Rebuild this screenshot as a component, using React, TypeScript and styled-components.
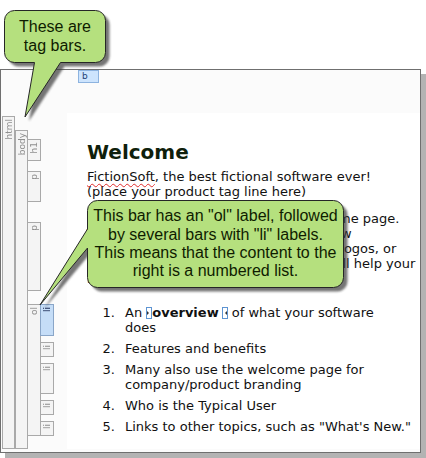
import React from "react";
import styled, { createGlobalStyle } from "styled-components";

const Global = createGlobalStyle`
  html, body { margin: 0; padding: 0; background: #ffffff; }
  body { width: 426px; height: 458px; overflow: hidden; }
`;

const Stage = styled.div`
  position: relative;
  width: 426px;
  height: 458px;
  padding-top: 69px;
  box-sizing: border-box;
  font-family: "DejaVu Sans", Verdana, sans-serif;
`;

const Frame = styled.div`
  width: 421px;
  height: 384px;
  box-sizing: border-box;
  border: 1px solid #6f6f6f;
  box-shadow: 5px 5px 0 #b3b3b3;
  display: flex;
  background: #fbfbfb;
`;

const Sidebar = styled.div`
  width: 66px;
  flex: none;
  box-sizing: border-box;
  padding: 46px 0 3px 1px;
  display: flex;
`;

const Level = styled.div<{ $mt?: number; $h?: number; $grow?: boolean }>`
  display: flex;
  align-items: stretch;
  margin-top: ${(p) => p.$mt ?? 0}px;
  ${(p) => (p.$h ? `height: ${p.$h}px; flex: none;` : "")}
  ${(p) => (p.$grow ? "flex: 1;" : "")}
`;

const Children = styled.div<{ $overlap?: boolean }>`
  display: flex;
  flex-direction: column;
  margin-left: ${(p) => (p.$overlap ? -1 : 0)}px;
`;

const BarBox = styled.div<{ $w: number; $mt: number; $h?: number; $sel?: boolean }>`
  width: ${(p) => p.$w}px;
  flex: none;
  ${(p) => (p.$h ? `height: ${p.$h}px;` : "")}
  margin-top: ${(p) => p.$mt}px;
  box-sizing: border-box;
  border: 1px solid ${(p) => (p.$sel ? "#8aa6c8" : "#a9a9a9")};
  background: ${(p) => (p.$sel ? "#c5ddf7" : "#f4f4f4")};
  display: flex;
  justify-content: center;
  align-items: flex-start;
  padding-top: 2px;
`;

const BarLabel = styled.span<{ $sel?: boolean }>`
  writing-mode: vertical-rl;
  transform: rotate(180deg);
  font-family: "DejaVu Sans", Tahoma, sans-serif;
  font-size: 9px;
  line-height: 10px;
  color: ${(p) => (p.$sel ? "#1b2b55" : "#8f8f8f")};
`;

function Bar(props: { label: string; w?: number; mt?: number; h?: number; sel?: boolean }) {
  return (
    <BarBox $w={props.w ?? 14} $mt={props.mt ?? 0} $h={props.h} $sel={props.sel}>
      <BarLabel $sel={props.sel}>{props.label}</BarLabel>
    </BarBox>
  );
}

const Main = styled.div`
  flex: 1;
  display: flex;
  flex-direction: column;
  min-width: 0;
`;

const TopStrip = styled.div`
  height: 43px;
  flex: none;
  padding-left: 11px;
  display: flex;
  align-items: flex-start;
`;

const InlineTag = styled.div`
  width: 21px;
  height: 13px;
  box-sizing: border-box;
  border: 1px solid #8db3df;
  background: #cde4fd;
  font-family: "DejaVu Sans", Tahoma, sans-serif;
  font-size: 9px;
  line-height: 11px;
  color: #1f3f78;
  padding-left: 3px;
`;

const Content = styled.div`
  flex: 1;
  background: #ffffff;
  padding: 27px 0 0 20px;
  margin-bottom: 3px;
  color: #111111;
  overflow: hidden;
`;

const Title = styled.h1`
  margin: 0;
  font-family: "DejaVu Sans", Verdana, sans-serif;
  font-weight: bold;
  font-size: 20px;
  line-height: 24px;
  color: #0f1f0c;
`;

const Para = styled.p<{ $mt: number }>`
  margin: ${(p) => p.$mt}px 0 0;
  font-size: 13px;
  line-height: 15px;
  white-space: nowrap;
`;

const Misspelled = styled.span`
  text-decoration: underline wavy #e02b2b;
  text-decoration-thickness: 1px;
  text-underline-offset: 2px;
`;

const List = styled.ol`
  list-style: none;
  margin: 19px 0 0;
  padding: 0;
  display: flex;
  flex-direction: column;
  gap: 6px;
`;

const Item = styled.li`
  display: grid;
  grid-template-columns: 28px 1fr;
  column-gap: 10px;
  font-size: 13px;
  line-height: 15px;
  white-space: nowrap;
`;

const Num = styled.span`
  text-align: right;
`;

const Marker = styled.span<{ $close?: boolean }>`
  display: inline-block;
  position: relative;
  width: 6px;
  height: 12px;
  box-sizing: border-box;
  border: 1px solid #5d94d2;
  vertical-align: -2px;
  margin-left: ${(p) => (p.$close ? 3 : 0)}px;
  &::after {
    content: "";
    position: absolute;
    top: 3px;
    ${(p) => (p.$close ? "right: 0;" : "left: 0;")}
    width: 0;
    height: 0;
    border-top: 2px solid transparent;
    border-bottom: 2px solid transparent;
    ${(p) => (p.$close ? "border-right: 2px solid #333;" : "border-left: 2px solid #333;")}
  }
`;

const CalloutWrap = styled.div<{ $l: number; $t: number; $w: number; $h: number }>`
  position: absolute;
  left: ${(p) => p.$l}px;
  top: ${(p) => p.$t}px;
  width: ${(p) => p.$w}px;
  height: ${(p) => p.$h}px;
  pointer-events: none;
  svg { position: absolute; left: 0; top: 0; overflow: visible; }
`;

const CalloutText = styled.div<{ $l: number; $t: number; $w: number; $h: number }>`
  position: absolute;
  left: ${(p) => p.$l}px;
  top: ${(p) => p.$t}px;
  width: ${(p) => p.$w}px;
  height: ${(p) => p.$h}px;
  display: flex;
  align-items: center;
  justify-content: center;
  text-align: center;
  font-family: "Liberation Sans", Arial, sans-serif;
  font-size: 16px;
  line-height: 18.3px;
  color: #0f1c00;
  white-space: nowrap;
`;

function Callout(props: {
  box: [number, number, number, number];
  text: [number, number, number, number];
  d: string;
  id: string;
  children: React.ReactNode;
}) {
  const [l, t, w, h] = props.box;
  const [tx, ty, tw, th] = props.text;
  return (
    <CalloutWrap $l={l} $t={t} $w={w} $h={h}>
      <svg width={w} height={h} viewBox={`${l} ${t} ${w} ${h}`}>
        <defs>
          <filter id={props.id} x="-10%" y="-10%" width="120%" height="120%">
            <feGaussianBlur stdDeviation="0.8" />
          </filter>
        </defs>
        <path d={props.d} transform="translate(4 4)" fill="#3a3a3a" opacity="0.7" filter={`url(#${props.id})`} />
        <path d={props.d} fill="#b5e07e" stroke="#262626" strokeWidth="1" strokeLinejoin="round" />
      </svg>
      <CalloutText $l={tx - l} $t={ty - t} $w={tw} $h={th}>
        {props.children}
      </CalloutText>
    </CalloutWrap>
  );
}

const path1 =
  "M14.5 10.5 H95.5 A10 10 0 0 1 105.5 20.5 V52.5 A10 10 0 0 1 95.5 62.5 H60.5 L25 117 L34.5 62.5 H14.5 A10 10 0 0 1 4.5 52.5 V20.5 A10 10 0 0 1 14.5 10.5 Z";
const path2 =
  "M97.5 200.5 H333.5 A10 10 0 0 1 343.5 210.5 V277.5 A10 10 0 0 1 333.5 287.5 H97.5 A10 10 0 0 1 87.5 277.5 V248 L40 305 L87.5 229 V210.5 A10 10 0 0 1 97.5 200.5 Z";

export default function App() {
  return (
    <>
      <Global />
      <Stage>
        <Frame>
          <Sidebar>
            <Level $grow>
              <Bar label="html" w={13} />
              <Children>
                <Level $grow $mt={14}>
                  <Bar label="body" w={13} />
                  <Children $overlap>
                    <Bar label="h1" mt={9} h={22} />
                    <Bar label="p" mt={10} h={31} />
                    <Bar label="p" mt={20} h={69} />
                    <Level $mt={13} $h={132}>
                      <Bar label="ol" />
                      <Children $overlap>
                        <Bar label="li" h={32} sel />
                        <Bar label="li" mt={6} h={15} />
                        <Bar label="li" mt={6} h={31} />
                        <Bar label="li" mt={6} h={15} />
                        <Bar label="li" mt={6} h={15} />
                      </Children>
                    </Level>
                  </Children>
                </Level>
              </Children>
            </Level>
          </Sidebar>
          <Main>
            <TopStrip>
              <InlineTag>b</InlineTag>
            </TopStrip>
            <Content>
              <Title>Welcome</Title>
              <Para $mt={5}>
                <Misspelled>FictionSoft</Misspelled>, the best fictional software ever!
                <br />
                (place your product tag line here)
              </Para>
              <Para $mt={12}>
                Introducing your product on this welcome page.
                <br />
                Tell users what they can expect and how
                <br />
                Some authors like to add screenshots, logos, or
                <br />
                other images and anything else that will help your
                <br />
                buyers get started.
              </Para>
              <List>
                <Item>
                  <Num>1.</Num>
                  <span>
                    An <Marker />
                    <b>overview</b>
                    <Marker $close /> of what your software
                    <br />
                    does
                  </span>
                </Item>
                <Item>
                  <Num>2.</Num>
                  <span>Features and benefits</span>
                </Item>
                <Item>
                  <Num>3.</Num>
                  <span>
                    Many also use the welcome page for
                    <br />
                    company/product branding
                  </span>
                </Item>
                <Item>
                  <Num>4.</Num>
                  <span>Who is the Typical User</span>
                </Item>
                <Item>
                  <Num>5.</Num>
                  <span>Links to other topics, such as "What's New."</span>
                </Item>
              </List>
            </Content>
          </Main>
        </Frame>
        <Callout id="sh1" box={[0, 6, 116, 118]} text={[4, 10, 102, 53]} d={path1}>
          These are
          <br />
          tag bars.
        </Callout>
        <Callout id="sh2" box={[36, 196, 318, 116]} text={[87, 200, 257, 88]} d={path2}>
          This bar has an "ol" label, followed
          <br />
          by several bars with "li" labels.
          <br />
          This means that the content to the
          <br />
          right is a numbered list.
        </Callout>
      </Stage>
    </>
  );
}
